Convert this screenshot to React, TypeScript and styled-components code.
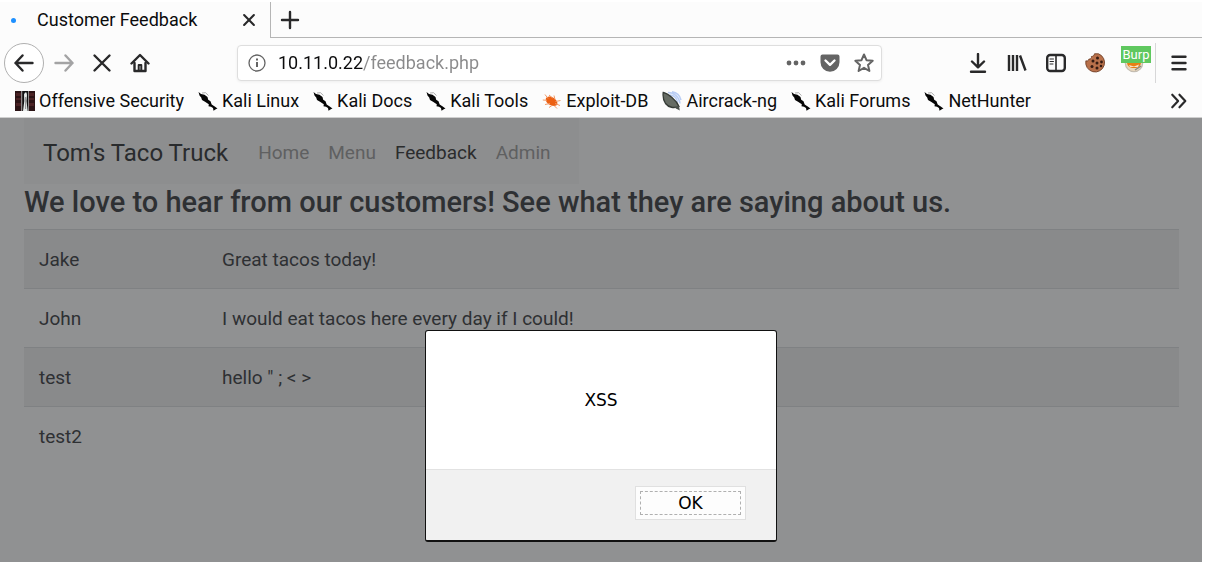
import React from "react";
import styled, { createGlobalStyle } from "styled-components";

const GlobalStyle = createGlobalStyle`
  * { box-sizing: border-box; }
  body { margin: 0; background: #fff; font-family: Roboto, "Liberation Sans", sans-serif; }
  button { font-family: inherit; }
`;

const Window = styled.div`
  display: flex;
  flex-direction: column;
  min-height: 100vh;
  padding: 2px 8px 3px 0;
`;

const Chrome = styled.header`
  background: #fcfcfc;
  border-bottom: 1px solid #cfcfcf;
  color: #0c0c0d;
`;

const TabStrip = styled.div`
  display: flex;
  height: 36px;
`;

const Tab = styled.div`
  display: flex;
  align-items: center;
  width: 270px;
  padding: 0 9px 0 11px;
`;

const Throbber = styled.span`
  width: 5px;
  height: 5px;
  border-radius: 50%;
  background: #1e90ff;
`;

const TabTitle = styled.span`
  flex: 1;
  margin-left: 21px;
  font-size: 18px;
  line-height: 24px;
  white-space: nowrap;
`;

const TabRest = styled.div`
  display: flex;
  align-items: center;
  flex: 1;
  padding-left: 7px;
  border-left: 1px solid #b5b5b5;
  border-bottom: 1px solid #b5b5b5;
`;

const IconButton = styled.button<{ $width?: number; $faded?: boolean }>`
  position: relative;
  display: flex;
  flex: none;
  align-items: center;
  justify-content: center;
  width: ${(p) => p.$width ?? 39}px;
  height: 40px;
  padding: 0;
  border: 0;
  background: none;
  color: ${(p) => (p.$faded ? "#a3a3a4" : "#29292a")};
`;

const TabButton = styled(IconButton)`
  height: 24px;
`;

const BackButton = styled(IconButton)`
  border: 1px solid #b0b0b0;
  border-radius: 50%;
  background: #fff;
`;

const NavBar = styled.div`
  display: flex;
  align-items: center;
  height: 49px;
  padding-left: 4px;
`;

const UrlBox = styled.div`
  display: flex;
  align-items: center;
  flex: 1;
  height: 36px;
  margin: 0 76px 0 78px;
  padding: 0 0 0 10px;
  border: 1px solid #dedede;
  border-radius: 4px;
  background: #fff;
  box-shadow: 0 1px 3px rgba(0, 0, 0, 0.06);
  color: #646464;
`;

const UrlInput = styled.input`
  flex: 1;
  min-width: 0;
  height: 28px;
  margin-left: 12px;
  padding: 0;
  border: 0;
  outline: 0;
  font: 18px/28px Roboto, "Liberation Sans", sans-serif;
  color: #0c0c0d;
  background: linear-gradient(to right, #0c0c0d 85px, #8a8a8b 85px);
  background-clip: text;
  -webkit-background-clip: text;
  -webkit-text-fill-color: transparent;
`;

const UrlAction = styled(IconButton)`
  height: 28px;
  color: #646464;
`;

const Divider = styled.span`
  width: 1px;
  height: 40px;
  margin-left: 2px;
  background: #d7d7d8;
`;

const Badge = styled.span`
  position: absolute;
  top: 3px;
  left: 7px;
  width: 30px;
  background: #5fc85f;
  color: #fff;
  font-size: 13px;
  line-height: 17px;
  text-align: center;
`;

const Bookmarks = styled.nav`
  display: flex;
  align-items: center;
  gap: 14px;
  height: 30px;
  padding: 0 0 2px 15px;
`;

const Bookmark = styled.a`
  display: flex;
  align-items: center;
  gap: 4px;
  color: inherit;
  font-size: 18px;
  line-height: 24px;
  text-decoration: none;
  white-space: nowrap;
`;

const Overflow = styled(IconButton)`
  height: 28px;
  margin-left: auto;
`;

const Page = styled.main`
  position: relative;
  flex: 1;
  padding: 0 23px 0 24px;
  background: #909192;
  color: #2e3033;
`;

const SiteNav = styled.nav`
  display: flex;
  align-items: center;
  width: fit-content;
  height: 66px;
  padding: 4px 19px 0;
  background: #8d8e8f;
`;

const Brand = styled.a`
  margin-right: 20px;
  color: #292b2d;
  font-size: 24px;
  line-height: 36px;
  text-decoration: none;
  white-space: nowrap;
`;

const SiteLink = styled.a<{ $active?: boolean }>`
  padding: 10px 9px 10px 10px;
  color: ${(p) => (p.$active ? "#2b2c2d" : "#5f6061")};
  font-size: 19px;
  line-height: 28px;
  text-decoration: none;
`;

const Heading = styled.h1`
  margin: 0;
  padding-bottom: 8px;
  font-size: 29px;
  font-weight: 500;
  line-height: 37px;
`;

const FeedbackTable = styled.table`
  width: 100%;
  border-collapse: collapse;
  table-layout: fixed;
  font-size: 19px;
  line-height: 28px;
`;

const Row = styled.tr`
  height: 59px;
  border-top: 1px solid #7f8183;
  &:nth-child(odd) { background: #898a8b; }
  &:last-child { background: none; }
`;

const Cell = styled.td<{ $name?: boolean }>`
  width: ${(p) => (p.$name ? "183px" : "auto")};
  padding: 2px 15px 0;
`;

const Dialog = styled.div`
  position: absolute;
  top: 212px;
  left: 50%;
  width: 352px;
  transform: translateX(-50%);
  overflow: hidden;
  border: 1px solid #111;
  border-bottom-width: 2px;
  border-radius: 3px;
  background: #fff;
  color: #000;
  font-family: "DejaVu Sans", sans-serif;
  font-size: 17px;
  line-height: 24px;
`;

const DialogText = styled.p`
  margin: 0;
  padding: 57px 20px;
  text-align: center;
`;

const DialogFooter = styled.div`
  display: flex;
  justify-content: flex-end;
  padding: 16px 30px 20px;
  border-top: 1px solid #e2e2e2;
  background: #f1f1f1;
`;

const OkButton = styled.button`
  width: 111px;
  padding: 4px;
  border: 1px solid #e0e0e0;
  background: #fdfdfd;
  color: #000;
  font-size: 17px;
  line-height: 22px;
`;

const FocusRing = styled.span`
  display: block;
  border: 1px dashed #b0b0b0;
`;

type IconProps = { size?: number; children: React.ReactNode };
const Line = ({ size = 20, children }: IconProps) => (
  <svg width={size} height={size} viewBox="0 0 20 20" fill="none" stroke="currentColor" strokeWidth="2.4" strokeLinecap="round" strokeLinejoin="round" aria-hidden="true">
    {children}
  </svg>
);

const DragonIcon = () => (
  <svg width="20" height="20" viewBox="0 0 20 20" aria-hidden="true">
    <path d="M.5 1 3 3l3.500.8L9.500 6l.7 2.800 2.300 1.400 1.200 3.300 2.300 1.500 3.500 2.500-1.300.5-2.700 1.800-.5-2.800-2-1.300-2.500-.5.3-2L7 10.700 4 9 3.200 6.500 1.500 4.500Z" fill="#050505" />
    <path d="m4 2 3.500-.3 3 2.800" fill="none" stroke="#999" strokeWidth=".8" />
  </svg>
);

const OffsecIcon = () => (
  <svg width="20" height="20" viewBox="0 0 20 20" aria-hidden="true">
    <path d="M0 0h20v20H0z" fill="#2b1315" />
    <path d="M1 2h5v3H1zM1 7h5v2H1zM1 12h5v3H1zM14 2h5v3h-5zM14 7h5v2h-5zM14 12h5v3h-5z" fill="#4a2224" />
    <path d="M6 0h1.500v20H6zM13 0h1v20h-1z" fill="#8d8a8a" />
    <path d="M7.500 0H13v20H7.500z" fill="#101112" />
    <path d="M9 3.500 10 1.500h1.500L12 4l-.5 6 1.200 10H8l1.300-10Z" fill="#e6eae9" />
    <path d="M10.300 6h.8v12h-.8z" fill="#777" />
  </svg>
);

const SpiderIcon = () => (
  <svg width="20" height="20" viewBox="0 0 20 20" aria-hidden="true">
    <path d="M4 7c3-2.500 7-1.500 10 2 2.500 3 1.500 6-2 6-4.500 0-9.500-4-8-8Z" fill="#ec6013" />
    <path d="m.8 9 4.200.3M3 3.500l3 4M7 4l3.500 3M12 4.500l1 4M18.500 9.500l-5 1M18 14.500l-5-2M3 13.500l5-1M7 16.500l3-2M15 17.500l-3-3" stroke="#f29a68" strokeWidth="1" />
  </svg>
);

const DishIcon = () => (
  <svg width="20" height="20" viewBox="0 0 20 20" aria-hidden="true">
    <path d="M6 1.500c6 0 11 4 12 11M10 .8c4.500.7 8 4 9 8.200M8 4c4 .5 7 3.500 7.500 7.500" stroke="#b9cdf4" strokeWidth="1.500" fill="none" />
    <path d="M1.200 1.500C6 2.500 14.500 9 17 15.500 12 17.500 6.500 16.500 3.500 12.500 1.500 9.500.8 5 1.200 1.500Z" fill="#666c64" stroke="#343a35" strokeWidth="1.300" />
    <path d="m12 16 5-1 .8 4.500L14 17.500Z" fill="#4a504b" />
  </svg>
);

const CookieIcon = () => (
  <svg width="20" height="20" viewBox="0 0 20 20" aria-hidden="true">
    <path d="M9.500.8h4a9.400 9.400 0 1 1-12.600 7c1.400.6 2.900 0 3-1.700 1.900.2 2.900-1 2.500-2.600C8 3.500 9.300 2.500 9.500.8Z" fill="#b9714b" stroke="#704027" strokeWidth=".9" />
    <g fill="#351b12"><circle cx="12.500" cy="5" r="1.500" /><circle cx="8" cy="8" r="1.500" /><circle cx="12" cy="10" r="1.500" /><circle cx="16.500" cy="9" r="1.400" /><circle cx="7" cy="13.500" r="1.500" /><circle cx="12" cy="15" r="1.500" /><circle cx="16" cy="13" r="1.300" /></g>
  </svg>
);

const FoxyIcon = () => (
  <svg width="20" height="20" viewBox="0 0 20 20" aria-hidden="true">
    <circle cx="10" cy="10" r="8.700" fill="#ecd9bd" stroke="#c4bdb2" strokeWidth="1.200" />
    <path d="M3 9h14c0 4-3 6-7 6s-7-2-7-6Z" fill="#e87f14" />
    <path d="m5 12 5 1.500 5-2-1 2.500H6Z" fill="#f7e3c8" />
    <path d="m17 13-6 4" stroke="#8b8780" strokeWidth="1.500" />
  </svg>
);

const bookmarks: [string, () => React.ReactElement][] = [
  ["Offensive Security", OffsecIcon],
  ["Kali Linux", DragonIcon],
  ["Kali Docs", DragonIcon],
  ["Kali Tools", DragonIcon],
  ["Exploit-DB", SpiderIcon],
  ["Aircrack-ng", DishIcon],
  ["Kali Forums", DragonIcon],
  ["NetHunter", DragonIcon],
];

const siteLinks = ["Home", "Menu", "Feedback", "Admin"];

const feedback = [
  ["Jake", "Great tacos today!"],
  ["John", "I would eat tacos here every day if I could!"],
  ["test", 'hello " ; < >'],
  ["test2", ""],
];

export default function App() {
  return (
    <>
      <GlobalStyle />
      <Window>
        <Chrome>
          <TabStrip>
            <Tab>
              <Throbber />
              <TabTitle>Customer Feedback</TabTitle>
              <TabButton $width={24} aria-label="Close tab">
                <Line size={14}><path d="m3 3 14 14m0-14-14 14" strokeWidth="3" /></Line>
              </TabButton>
            </Tab>
            <TabRest>
              <TabButton $width={24} aria-label="New tab">
                <Line><path d="M10 2v16M2 10h16" /></Line>
              </TabButton>
            </TabRest>
          </TabStrip>

          <NavBar>
            <BackButton $width={40} aria-label="Back">
              <Line><path d="M18.500 10h-17m7-7.500L1.500 10l7 7.500" /></Line>
            </BackButton>
            <IconButton $faded aria-label="Forward">
              <Line><path d="M1.500 10h17m-7-7.500 7 7.500-7 7.500" /></Line>
            </IconButton>
            <IconButton $width={38} aria-label="Stop">
              <Line><path d="m2.500 2.500 15 15M17.500 2.500l-15 15" /></Line>
            </IconButton>
            <IconButton $width={38} aria-label="Home">
              <Line>
                <path d="m1.500 10.500 8.500-8.500 8.500 8.500" />
                <path d="M4.500 10V18h11v-8" />
                <path d="M8.700 17v-5h2.600v5" strokeWidth="2" />
              </Line>
            </IconButton>
            <UrlBox>
              <svg width="18" height="18" viewBox="0 0 18 18" fill="none" stroke="currentColor" aria-hidden="true">
                <circle cx="9" cy="9" r="8" strokeWidth="1.300" />
                <path d="M9 8v5M9 4.500v2" strokeWidth="2" />
              </svg>
              <UrlInput aria-label="Address" defaultValue="10.11.0.22/feedback.php" />
              <UrlAction $width={34} aria-label="Page actions">
                <svg width="20" height="20" viewBox="0 0 20 20" fill="currentColor" aria-hidden="true"><circle cx="3" cy="10" r="2.400" /><circle cx="10" cy="10" r="2.400" /><circle cx="17" cy="10" r="2.400" /></svg>
              </UrlAction>
              <UrlAction $width={34} aria-label="Save to Pocket">
                <svg width="20" height="18" viewBox="0 0 20 18" aria-hidden="true"><path d="M2.500.5h15a2 2 0 0 1 2 2v5.800a9.500 9.500 0 0 1-19 0V2.500a2 2 0 0 1 2-2Z" fill="currentColor" /><path d="m5.500 6.500 4.500 4.300 4.500-4.300" stroke="#fff" strokeWidth="2.400" fill="none" strokeLinecap="round" strokeLinejoin="round" /></svg>
              </UrlAction>
              <UrlAction $width={34} aria-label="Bookmark page">
                <Line><path d="m10 1.500 2.500 5.700 6.200.6-4.700 4.100 1.400 6.100-5.400-3.200L4.600 18 6 11.900 1.300 7.800l6.200-.6Z" strokeWidth="2" /></Line>
              </UrlAction>
            </UrlBox>
            <IconButton aria-label="Downloads">
              <Line><path d="M10 1v13M4 8.500l6 5.800 6-5.800M3 18.700h14" /></Line>
            </IconButton>
            <IconButton aria-label="Library">
              <Line><path d="M2 2v16M6 2v16M10 2v16M13 2.500 18.500 17.500" strokeLinecap="butt" /></Line>
            </IconButton>
            <IconButton aria-label="Sidebars">
              <Line><rect x="1.200" y="2" width="17.600" height="16" rx="3" /><path d="M10 2v16" strokeWidth="1.600" /><path d="M4 6h3.500M4 8.500h3.500M4 11h3" strokeWidth="1" /></Line>
            </IconButton>
            <IconButton aria-label="Cookies"><CookieIcon /></IconButton>
            <IconButton aria-label="Proxy">
              <FoxyIcon />
              <Badge>Burp</Badge>
            </IconButton>
            <Divider />
            <IconButton $width={46} aria-label="Open menu">
              <Line><path d="M3.500 3.800h13M3.500 10h13M3.500 16.200h13" /></Line>
            </IconButton>
          </NavBar>

          <Bookmarks aria-label="Bookmarks">
            {bookmarks.map(([label, Icon]) => (
              <Bookmark href="#" key={label}>
                <Icon />
                {label}
              </Bookmark>
            ))}
            <Overflow $width={47} aria-label="More bookmarks">
              <Line size={18}><path d="m2.500 3 6.500 7-6.500 7M10.500 3l6.500 7-6.500 7" /></Line>
            </Overflow>
          </Bookmarks>
        </Chrome>

        <Page>
          <SiteNav aria-label="Site">
            <Brand href="#">Tom's Taco Truck</Brand>
            {siteLinks.map((label) => (
              <SiteLink href="#" key={label} $active={label === "Feedback"}>{label}</SiteLink>
            ))}
          </SiteNav>
          <Heading>We love to hear from our customers! See what they are saying about us.</Heading>
          <FeedbackTable>
            <tbody>
              {feedback.map(([name, text]) => (
                <Row key={name}>
                  <Cell $name>{name}</Cell>
                  <Cell>{text}</Cell>
                </Row>
              ))}
            </tbody>
          </FeedbackTable>

          <Dialog role="alertdialog" aria-modal="true" aria-labelledby="alert-text">
            <DialogText id="alert-text">XSS</DialogText>
            <DialogFooter>
              <OkButton><FocusRing>OK</FocusRing></OkButton>
            </DialogFooter>
          </Dialog>
        </Page>
      </Window>
    </>
  );
}
